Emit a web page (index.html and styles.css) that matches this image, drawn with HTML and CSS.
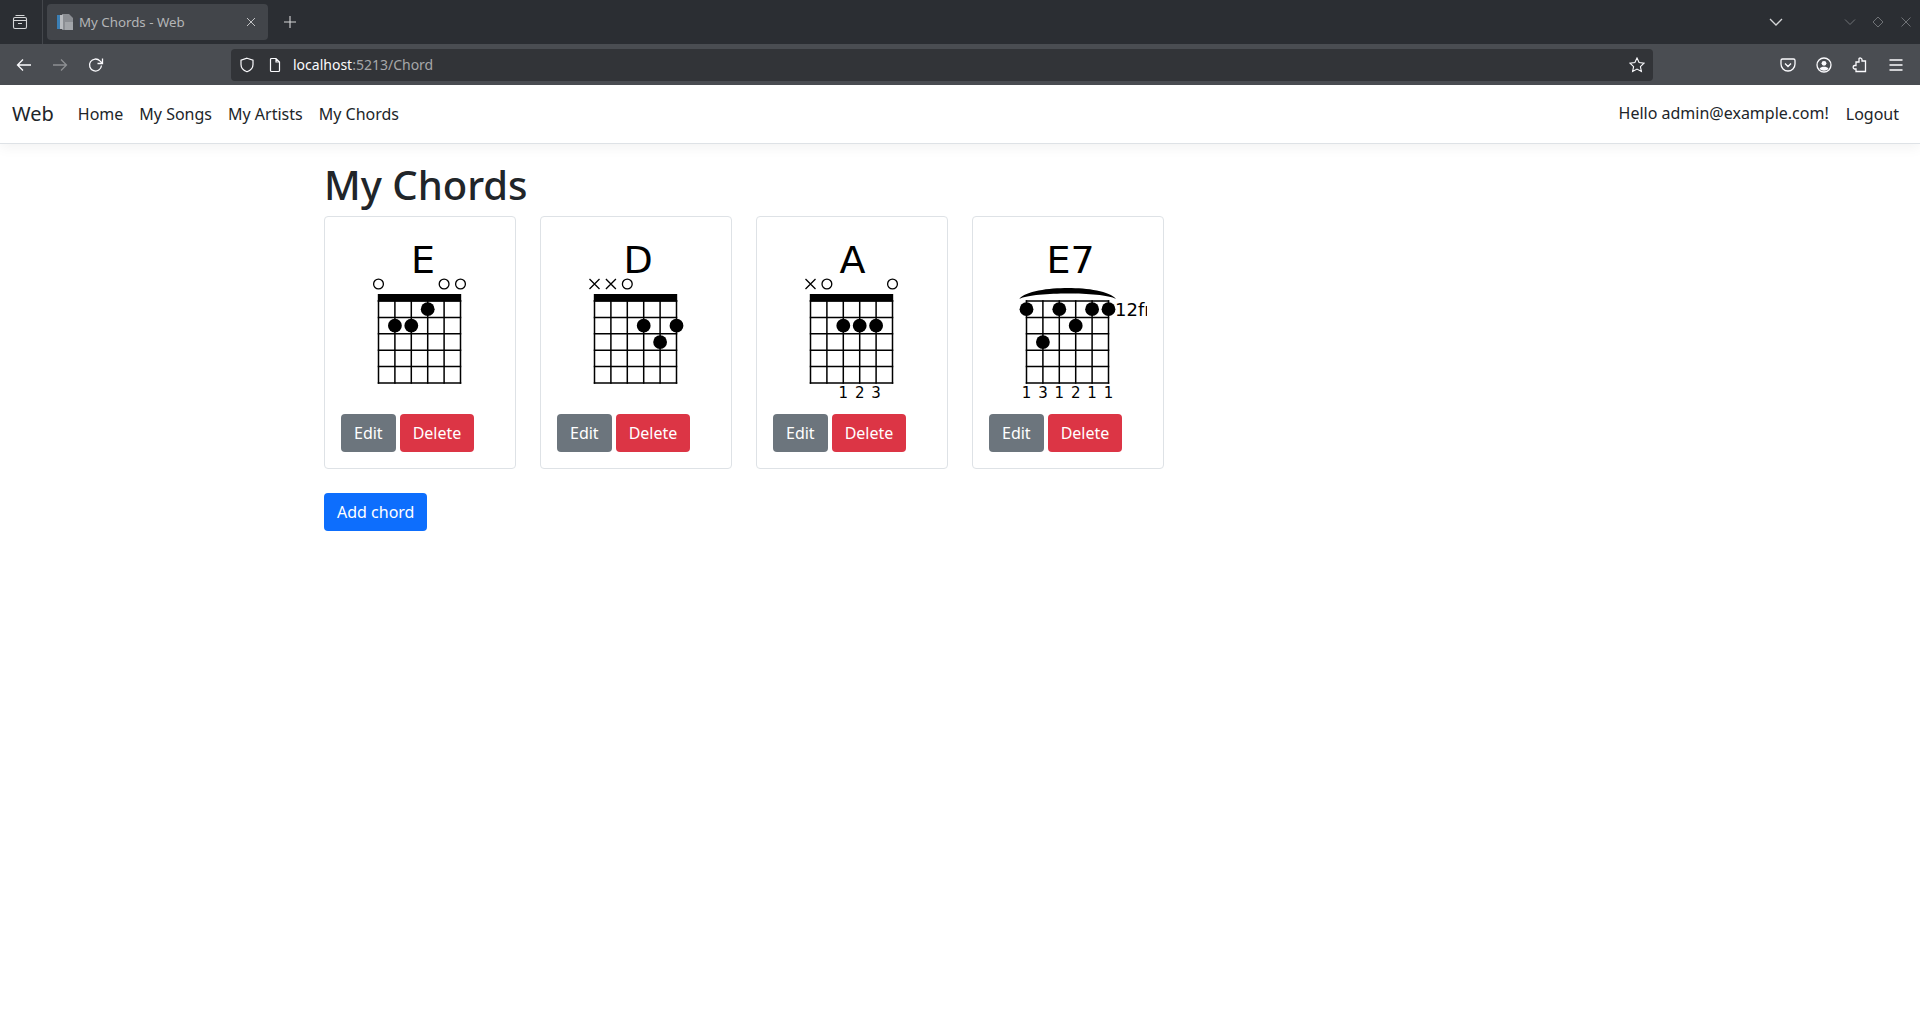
FILE: index.html
```html
<!DOCTYPE html>
<html lang="en">
<head>
    <meta charset="UTF-8">
    <meta name="viewport" content="width=device-width, initial-scale=1.0">
    <title>My Chords - Web</title>
    <link rel="stylesheet" href="styles.css">
</head>
<body>
    <!-- browser frame -->
    <div class="tabbar">
        <svg class="icon tabs-icon" viewBox="0 0 16 16"><path d="M3.500 1.500h9M1.500 5a1.500 1.500 0 0 1 1.500-1.500h10a1.500 1.500 0 0 1 1.500 1.500v8a1.500 1.500 0 0 1-1.500 1.500H3a1.500 1.500 0 0 1-1.500-1.500zM1.500 6.500h13M6 9.500h4"/></svg>
        <div class="tab-sep"></div>
        <div class="tab">
            <svg class="favicon" viewBox="0 0 16 16"><path class="fav-back" d="M5 0h7l4 4v12H5z"/><path class="fav-blue" d="M0 1h3v14H0z"/><path class="fav-mid" d="M3 1h3v14H3z"/><path class="fav-low" d="M8 8h8v8H8z"/></svg>
            <span class="tab-title">My Chords - Web</span>
            <svg class="icon tab-close" viewBox="0 0 16 16"><path d="M4 4l8 8M12 4l-8 8"/></svg>
        </div>
        <svg class="icon new-tab" viewBox="0 0 16 16"><path d="M8 2v12M2 8h12"/></svg>
        <svg class="icon tab-list" viewBox="0 0 16 16"><path d="M2 5l6 6 6-6"/></svg>
        <div class="window-controls">
            <svg class="icon" viewBox="0 0 16 16"><path d="M3 5.500l5 5 5-5"/></svg>
            <svg class="icon" viewBox="0 0 16 16"><path d="M8 3l5 5-5 5-5-5z"/></svg>
            <svg class="icon" viewBox="0 0 16 16"><path d="M3.500 3.500l9 9M12.500 3.500l-9 9"/></svg>
        </div>
    </div>
    <div class="toolbar">
        <svg class="icon tool" viewBox="0 0 16 16"><path d="M15 8H1.500M7 2.500L1.500 8 7 13.500"/></svg>
        <svg class="icon tool tool-off" viewBox="0 0 16 16"><path d="M1 8h13.500M9 2.500L14.500 8 9 13.500"/></svg>
        <svg class="icon tool" viewBox="0 0 16 16"><path d="M13.500 8.500a6 6 0 1 1-1.600-4.600L14 6M14.500 1.500V6.500H9.500"/></svg>
        <div class="urlbar">
            <svg class="icon shield" viewBox="0 0 16 16"><path d="M8 1.200l6 2v4.300c0 3.500-2.500 6-6 7.300-3.500-1.300-6-3.800-6-7.300V3.200z"/></svg>
            <svg class="icon page" viewBox="0 0 16 16"><path d="M3.500 2.500a1 1 0 0 1 1-1H9L12.500 5v8.500a1 1 0 0 1-1 1h-7a1 1 0 0 1-1-1zM9 1.500V5h3.500"/></svg>
            <span class="url"><span class="url-host">localhost</span>:5213/Chord</span>
            <svg class="icon star" viewBox="0 0 16 16"><path d="M8 1l2.100 4.600 4.900.6-3.600 3.400 1 4.900L8 12.100 3.600 14.500l1-4.900L1 6.200l4.900-.6z"/></svg>
        </div>
        <div class="tool-right">
            <svg class="icon" viewBox="0 0 16 16"><path d="M2.500 2h11A1.500 1.500 0 0 1 15 3.500V7A7 7 0 0 1 1 7V3.500A1.500 1.500 0 0 1 2.500 2zM5 6.500l3 3 3-3"/></svg>
            <svg class="icon" viewBox="0 0 16 16"><circle cx="8" cy="8" r="7"/><circle class="solid" cx="8" cy="6.300" r="2.400"/><path class="solid" d="M3.500 11.800c1-1.500 2.500-2 4.500-2s3.500.5 4.500 2C11.500 13 10 13.800 8 13.800s-3.500-.8-4.500-2z"/></svg>
            <svg class="icon" viewBox="0 0 16 16"><path d="M7 1.500a1.800 1.800 0 0 1 3 1.500v1h3.500v10.500H4V12H2.500a1.800 1.800 0 0 1 0-3.500H4V5h3V3c0-.6 0-1 0-1.500z"/></svg>
            <svg class="icon" viewBox="0 0 16 16"><path d="M1.500 3h13M1.500 8h13M1.500 13h13"/></svg>
        </div>
    </div>

    <header class="navbar">
        <a class="brand">Web</a>
        <nav class="nav-links">
            <a>Home</a>
            <a>My Songs</a>
            <a>My Artists</a>
            <a>My Chords</a>
        </nav>
        <div class="nav-user">
            <span class="hello">Hello admin@example.com!</span>
            <a>Logout</a>
        </div>
    </header>

    <main class="content">
        <h1>My Chords</h1>
        <div class="chord-list">
            <div class="chord-card">
                <svg class="chord" viewBox="0 0 158 181">
                    <text class="chord-name" x="70" y="39.700">E</text>
                    <g id="board" class="board">
                        <path d="M37.500 68H119.500M37.500 84.400H119.500M37.500 100.800H119.500M37.500 117.200H119.500M37.500 133.600H119.500M37.500 150H119.500"/>
                        <path d="M37.500 68V150M53.900 68V150M70.300 68V150M86.700 68V150M103.100 68V150M119.500 68V150"/>
                    </g>
                    <rect id="nut" x="36.800" y="61" width="83.400" height="7.500"/>
                    <circle class="open" cx="37.500" cy="51" r="4.900"/>
                    <circle class="open" cx="103.100" cy="51" r="4.900"/>
                    <circle class="open" cx="119.500" cy="51" r="4.900"/>
                    <circle cx="53.900" cy="92.700" r="6.900"/>
                    <circle cx="70.300" cy="92.700" r="6.900"/>
                    <circle cx="86.700" cy="76.200" r="6.900"/>
                </svg>
                <div class="chord-actions">
                    <a class="btn btn-grey">Edit</a>
                    <a class="btn btn-red">Delete</a>
                </div>
            </div>

            <div class="chord-card">
                <svg class="chord" viewBox="0 0 158 181">
                    <text class="chord-name" x="66.500" y="39.700">D</text>
                    <use href="#board"/>
                    <use href="#nut"/>
                    <path class="mute" d="M32.500 46l10 10M42.500 46l-10 10M48.900 46l10 10M58.900 46l-10 10"/>
                    <circle class="open" cx="70.300" cy="51" r="4.900"/>
                    <circle cx="86.700" cy="92.700" r="6.900"/>
                    <circle cx="103.100" cy="109.100" r="6.900"/>
                    <circle cx="119.500" cy="92.700" r="6.900"/>
                </svg>
                <div class="chord-actions">
                    <a class="btn btn-grey">Edit</a>
                    <a class="btn btn-red">Delete</a>
                </div>
            </div>

            <div class="chord-card">
                <svg class="chord" viewBox="0 0 158 181">
                    <text class="chord-name" x="66.500" y="39.700">A</text>
                    <use href="#board"/>
                    <use href="#nut"/>
                    <path class="mute" d="M32.500 46l10 10M42.500 46l-10 10"/>
                    <circle class="open" cx="53.900" cy="51" r="4.900"/>
                    <circle class="open" cx="119.500" cy="51" r="4.900"/>
                    <circle cx="70.300" cy="92.700" r="6.900"/>
                    <circle cx="86.700" cy="92.700" r="6.900"/>
                    <circle cx="103.100" cy="92.700" r="6.900"/>
                    <text class="finger" x="70.300" y="165">1</text>
                    <text class="finger" x="86.700" y="165">2</text>
                    <text class="finger" x="103.100" y="165">3</text>
                </svg>
                <div class="chord-actions">
                    <a class="btn btn-grey">Edit</a>
                    <a class="btn btn-red">Delete</a>
                </div>
            </div>

            <div class="chord-card">
                <svg class="chord" viewBox="0 0 158 181">
                    <text class="chord-name" x="57.500" y="39.700">E7</text>
                    <use href="#board"/>
                    <path d="M30.300 66C36 58 60 55 79 55S121 58 127 66C120 62 98 60.500 79 60.500S38 62 30.300 66z"/>
                    <circle cx="37.500" cy="76.200" r="6.900"/>
                    <circle cx="53.900" cy="109.100" r="6.900"/>
                    <circle cx="70.300" cy="76.200" r="6.900"/>
                    <circle cx="86.700" cy="92.700" r="6.900"/>
                    <circle cx="103.100" cy="76.200" r="6.900"/>
                    <circle cx="119.500" cy="76.200" r="6.900"/>
                    <text class="fret-label" x="126" y="83">12fr</text>
                    <text class="finger" x="37.500" y="165">1</text>
                    <text class="finger" x="53.900" y="165">3</text>
                    <text class="finger" x="70.300" y="165">1</text>
                    <text class="finger" x="86.700" y="165">2</text>
                    <text class="finger" x="103.100" y="165">1</text>
                    <text class="finger" x="119.500" y="165">1</text>
                </svg>
                <div class="chord-actions">
                    <a class="btn btn-grey">Edit</a>
                    <a class="btn btn-red">Delete</a>
                </div>
            </div>
        </div>
        <a class="btn btn-blue add-chord">Add chord</a>
    </main>
</body>
</html>
```

FILE: styles.css
```css
html, body {
    height: 100%;
    margin: 0;
    overflow: hidden;
}
body {
    font-family: "Noto Sans", "Open Sans", sans-serif;
    font-size: 16px;
    line-height: 1.5;
    color: #212529;
    background: #fff;
}

/* browser frame */
.icon {
    width: 16px;
    height: 16px;
    flex: none;
    fill: none;
    stroke: #fbfbfe;
    stroke-width: 1.3;
}
.tabbar {
    height: 44px;
    display: flex;
    align-items: center;
    background: #2b2e33;
}
.tabs-icon {
    margin-left: 12px;
    stroke: #d5d6d8;
    stroke-width: 1.1;
}
.tab-sep {
    width: 1px;
    height: 44px;
    margin-left: 14px;
    background: #44474c;
}
.tab {
    width: 221px;
    height: 36px;
    margin-left: 4px;
    padding: 0 9px 0 10px;
    box-sizing: border-box;
    display: flex;
    align-items: center;
    border-radius: 4px;
    background: #42454a;
}
.favicon {
    width: 16px;
    height: 16px;
    flex: none;
}
.fav-back { fill: #8b8e93; }
.fav-blue { fill: #3b7fb5; }
.fav-mid { fill: #b9bcc0; }
.fav-low { fill: #a3a6aa; }
.tab-title {
    margin: 2px 0 0 6px;
    flex: 1;
    font-size: 13.300px;
    color: #b4b5b7;
}
.tab-close {
    stroke: #c2c3c5;
    stroke-width: 1;
}
.new-tab {
    margin-left: 14px;
    stroke: #d5d6d8;
    stroke-width: 1.1;
}
.tab-list {
    margin-left: 1470px;
    stroke: #d5d6d8;
}
.window-controls {
    margin-left: auto;
    margin-right: 6px;
    display: flex;
    gap: 12px;
}
.window-controls .icon {
    stroke: #6f7276;
    stroke-width: 1;
}
.toolbar {
    height: 41px;
    display: flex;
    align-items: center;
    background: #4a4d52;
}
.tool {
    margin-left: 16px;
}
.tool + .tool {
    margin-left: 20px;
}
.tool-off {
    stroke: #8d8f92;
}
.urlbar {
    width: 1422px;
    height: 32px;
    margin-left: 127px;
    padding: 0 8px;
    box-sizing: border-box;
    display: flex;
    align-items: center;
    border-radius: 4px;
    background: #323438;
}
.shield {
    stroke-width: 1.2;
}
.page {
    margin-left: 12px;
    stroke-width: 1.2;
}
.url {
    margin-left: 10px;
    flex: 1;
    font-size: 14px;
    color: #a6a7a9;
}
.url-host {
    color: #fbfbfe;
}
.star {
    stroke-width: 1.1;
}
.tool-right {
    margin-left: 127px;
    display: flex;
    gap: 20px;
}
.solid {
    fill: #fbfbfe;
    stroke: none;
}

/* site nav */
.navbar {
    height: 59px;
    padding: 0 12px;
    box-sizing: border-box;
    display: flex;
    align-items: center;
    background: #fff;
    border-bottom: 1px solid #dee2e6;
    box-shadow: 0 4px 12px rgba(0, 0, 0, .05);
}
.brand {
    font-size: 20px;
    margin-right: 16px;
}
.nav-links {
    display: flex;
}
.nav-links a {
    padding: 8px;
}
.nav-user {
    margin-left: auto;
    display: flex;
    align-items: center;
}
.hello {
    margin-top: -2px;
}
.nav-user a {
    padding: 8px 8px 8px 17px;
    margin-right: 1px;
}

/* page */
.content {
    padding: 17px 0 0 324px;
}
h1 {
    margin: 0 0 7px;
    font-size: 40px;
    font-weight: 500;
    line-height: 1.2;
}
.chord-list {
    display: flex;
    gap: 24px;
    margin-bottom: 24px;
}
.chord-card {
    width: 192px;
    padding: 16px;
    box-sizing: border-box;
    border: 1px solid #dee2e6;
    border-radius: 4px;
}
.chord {
    display: block;
    width: 158px;
    height: 181px;
}
.chord-name {
    font-family: "DejaVu Sans", sans-serif;
    font-size: 38px;
}
.board path {
    fill: none;
    stroke: #000;
    stroke-width: 1.500;
    stroke-linecap: square;
}
.open, .mute {
    fill: none;
    stroke: #000;
    stroke-width: 1.300;
}
.finger {
    font-family: "DejaVu Sans", sans-serif;
    font-size: 15px;
    text-anchor: middle;
}
.fret-label {
    font-family: "DejaVu Sans", sans-serif;
    font-size: 18px;
}
.chord-actions {
    display: flex;
    gap: 4px;
}
.btn {
    display: inline-block;
    padding: 6px 12px;
    border: 1px solid transparent;
    border-radius: 4px;
    color: #fff;
}
.btn-grey { background: #6c757d; }
.btn-red { background: #dc3545; }
.btn-blue { background: #0d6efd; }
```
